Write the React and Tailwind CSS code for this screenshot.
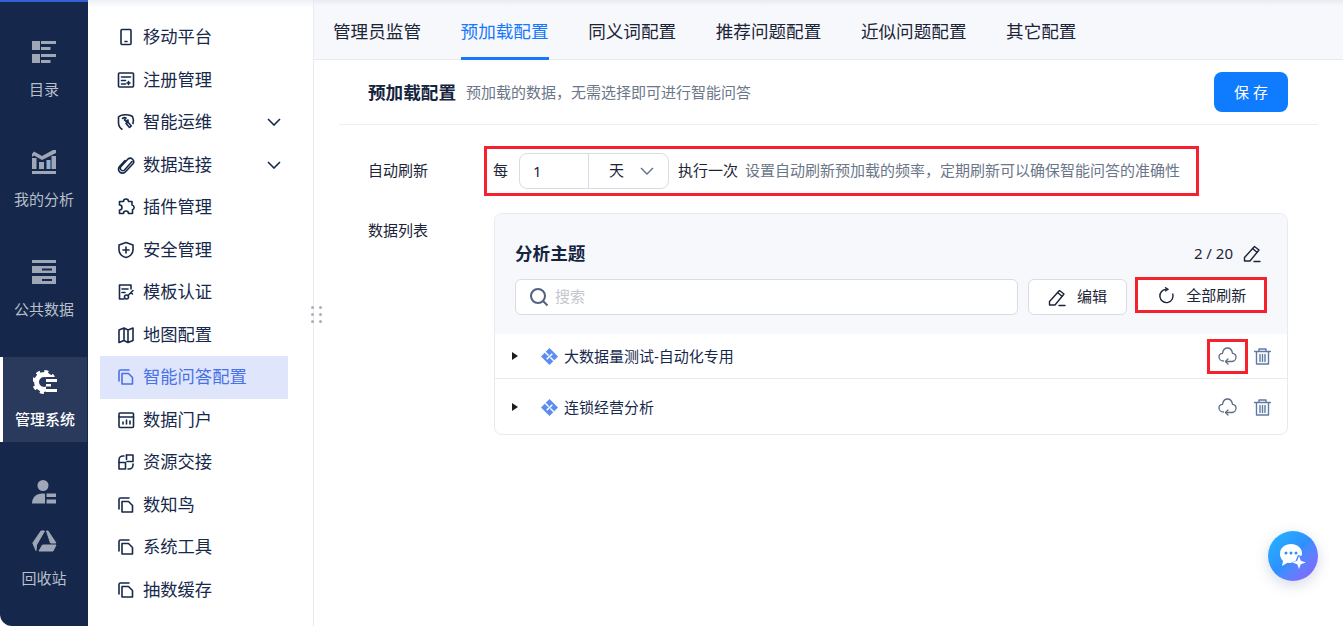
import React from 'react'

const FONT = { fontFamily: '"Noto Sans", "Noto Sans CJK SC", sans-serif' }

function Ico({ children, className = 'w-[18px] h-[18px]', sw = 1.6, vb = '0 0 18 18' }) {
  return (
    <svg viewBox={vb} className={className} fill="none" stroke="currentColor" strokeWidth={sw} strokeLinecap="round" strokeLinejoin="round">
      {children}
    </svg>
  )
}

const Pages = () => (
  <Ico>
    <path d="M2 13V3.500A1.500 1.500 0 0 1 3.500 2H12" />
    <path d="M5 5.500h6.500L15.500 9.500V16H5z" />
  </Ico>
)

const menu = [
  { label: '移动平台', icon: <Ico><rect x="4" y="1.500" width="10" height="15" rx="1" /><path d="M8 13.500h2" /></Ico> },
  { label: '注册管理', icon: <Ico><rect x="1.500" y="2" width="15" height="14" rx="1" /><path d="M4.500 6h9M4.500 9.500h4M4.500 13h4M11.500 10.500v3M10 12h3" /></Ico> },
  { label: '智能运维', arrow: true, icon: <Ico><path d="M5 16.200C3 15 1.500 12.500 1.500 9.500V4C4 1.500 12 .8 15.500 3.500c1 2 1 5 .5 7" /><path d="M5.500 5.500a3 3 0 0 1 3.500-.5L7.500 7l1.500 1.500L11 7a3 3 0 0 1-2 3.500l3.500 4 1.800-1.500-3-3.500" /></Ico> },
  { label: '数据连接', arrow: true, icon: <Ico><path d="M15 5.500l-7.500 8.500a2.500 2.500 0 0 1-3.700-3.300L11 3a3.500 3.500 0 0 1 5 4.800l-7.500 8a4 4 0 0 1-6-5.300L8 4.500" /></Ico> },
  { label: '插件管理', icon: <Ico><path d="M6.500 3.500a2.500 2.500 0 0 1 5 0h3.500V7a2.500 2.500 0 0 1 .5 4.800V15.500H11.500a2.500 2.500 0 0 0-5 0H2.500V12a2.500 2.500 0 0 0 0-5V3.500z" /></Ico> },
  { label: '安全管理', icon: <Ico><path d="M9 1.500l7 2.500v5c0 4-3.500 6.800-7 7.500-3.500-.7-7-3.500-7-7.500V4z" /><path d="M9 6v6M6 9h6" /></Ico> },
  { label: '模板认证', icon: <Ico><path d="M14 6V2H2.500v14H7" /><path d="M5 6h6M5 9.500h3" /><circle cx="9.500" cy="14" r="2" /><path d="M11 12.500l5-5M14 9.500l1.500 1.500" /></Ico> },
  { label: '地图配置', icon: <Ico><path d="M2 4l5-2 4 2 5-2v12.500l-5 2-4-2-5 2zM7 2v12.500M11 4v12.500" /></Ico> },
  { label: '智能问答配置', active: true, icon: <Pages /> },
  { label: '数据门户', icon: <Ico><rect x="2" y="2" width="14.500" height="14.500" rx="1" /><path d="M2 6h14.500M6 13v-2M9.500 13V9M13 13v-3" /></Ico> },
  { label: '资源交接', icon: <Ico><path d="M2 9.500h6.500V16H2zM9.500 2H16v6.500H10" /><path d="M9.500 2v4.500M2 9.500V7a4 4 0 0 1 4-4h1M11 16h1a4 4 0 0 0 4-4v-1" /></Ico> },
  { label: '数知鸟', icon: <Pages /> },
  { label: '系统工具', icon: <Pages /> },
  { label: '抽数缓存', icon: <Pages /> },
]

const G = '#9fa6b5'

function RailItem({ active, label, children }) {
  return (
    <div className={`flex flex-col items-center shrink-0 ${label ? 'h-[85px] mb-[25px]' : 'h-[49px]'} ${active ? 'bg-[#2a3a5d] border-l-[3px] border-white mr-px' : ''} ${active ? 'text-white' : 'text-[#b9bfca]'}`}>
      <div className="h-[25px] mt-[12px] flex items-center justify-center">{children}</div>
      {label && <div className={`text-[15px] leading-[20px] mt-[15px] whitespace-nowrap ${active ? 'font-medium' : ''}`}>{label}</div>}
    </div>
  )
}

function Rail() {
  return (
    <aside className="w-[88px] shrink-0 h-full bg-[#15284b] rounded-bl-[12px] overflow-hidden flex flex-col">
      <div className="h-[2px] shrink-0 bg-[#3261d8] mb-[25px]" />
      <RailItem label="目录">
        <svg viewBox="0 0 24 22" className="w-[24px] h-[22px]" fill={G}>
          <rect x="0" y="0" width="8" height="9" /><rect x="0" y="13" width="8" height="9" />
          <rect x="9" y="0" width="15" height="3" /><rect x="9" y="6" width="9.500" height="3" />
          <rect x="9" y="13" width="15" height="3" /><rect x="9" y="19" width="9.500" height="3" />
        </svg>
      </RailItem>
      <RailItem label="我的分析">
        <svg viewBox="0 0 24 24" className="w-[24px] h-[24px]" fill={G}>
          <rect x="0" y="21" width="24" height="3" />
          <rect x="0" y="8" width="4.500" height="11" /><rect x="7" y="12" width="5" height="7" />
          <rect x="14.500" y="10" width="4" height="9" fill="#8fb0d0" /><rect x="19.500" y="6" width="4.500" height="13" />
          <path d="M0 4l2-2.500 8 4.500 11-6h3v3L10 10 2 5.500 0 7z" />
        </svg>
      </RailItem>
      <RailItem label="公共数据">
        <svg viewBox="0 0 24 24" className="w-[24px] h-[24px]" fill={G}>
          <rect x="0" y="0" width="24" height="3" />
          <path d="M0 6h24v7H0zM10 8.500v2h10v-2z" fillRule="evenodd" />
          <path d="M0 16h24v8H0zM10 19v2h10v-2z" fillRule="evenodd" />
        </svg>
      </RailItem>
      <RailItem label="管理系统" active>
        <svg viewBox="0 0 24 24" className="w-[24px] h-[24px]" fill="none" stroke="#fff">
          <circle cx="11" cy="12" r="7.500" strokeWidth="5" />
          <circle cx="11" cy="12" r="10.500" strokeWidth="3" strokeDasharray="4 4.250" />
          <rect x="13" y="7" width="11" height="17" fill="#2a3a5d" stroke="none" />
          <rect x="13" y="9" width="11" height="3" fill="#fff" stroke="none" />
          <rect x="13" y="14" width="5" height="2.500" fill="#fff" stroke="none" />
          <rect x="13" y="19" width="11" height="3" fill="#fff" stroke="none" />
        </svg>
      </RailItem>
      <RailItem>
        <svg viewBox="0 0 24 24" className="w-[24px] h-[24px]" fill={G}>
          <circle cx="11" cy="5.500" r="5.500" />
          <path d="M0 23.500c0-6 4-10 10.500-10 1 0 1.500 0 2.500.2v9.800z" />
          <rect x="14.500" y="13.500" width="9.500" height="3.500" /><rect x="14.500" y="19.500" width="9.500" height="4" />
        </svg>
      </RailItem>
      <RailItem label="回收站">
        <svg viewBox="0 0 25 22" className="w-[25px] h-[22px]" fill={G} stroke={G} strokeWidth="1" strokeLinejoin="round">
          <path d="M9 1h3.500L4.500 15 4 20.500.8 13z" />
          <path d="M14.500 1h1.500L24 13h-5.500z" />
          <path d="M10.500 15H24l-3 6H7z" />
        </svg>
      </RailItem>
    </aside>
  )
}

function SubNav() {
  return (
    <nav className="w-[226px] shrink-0 h-full border-r border-[#e9ebf0] bg-white overflow-hidden relative">
      <div className="absolute top-0 inset-x-0 h-[8px] bg-gradient-to-b from-[#eef0f4] to-white" />
      <ul className="pl-[12px] pr-[25px] pt-[16px]">
        {menu.map((m) => (
          <li key={m.label} className={`h-[42.5px] flex items-center pl-[17px] pr-[7px] ${m.active ? 'bg-[#dfe5fa] text-[#4a72e8]' : 'text-[#17294b]'}`}>
            <span className="w-[18px] h-[18px] flex shrink-0">{m.icon}</span>
            <span className="ml-[8px] text-[17.3px] whitespace-nowrap">{m.label}</span>
            {m.arrow && (
              <svg viewBox="0 0 14 8" className="w-[14px] h-[8px] ml-auto" fill="none" stroke="currentColor" strokeWidth="1.6">
                <path d="M1 1l6 6 6-6" />
              </svg>
            )}
          </li>
        ))}
      </ul>
    </nav>
  )
}

const Pencil = ({ className = 'w-[19px] h-[19px]' }) => (
  <Ico className={className} sw={1.4} vb="0 0 19 19">
    <path d="M1.500 13.500L11.500 2.500l4.500 3.500L7 17H1.500z" />
    <path d="M9.500 4.500l4.500 3.800M11 17.500h6" />
  </Ico>
)

const CloudRefresh = () => (
  <Ico className="w-[19px] h-[18px] text-[#5f6c82]" sw={1.3} vb="0 0 19 18">
    <path d="M5.500 14C3 14 1 12.300 1 10c0-2 1.500-3.500 3.500-3.700C5 3 7 1 9.500 1S14 3 14.500 6.300C16.500 6.500 18 8 18 10c0 2.500-2 4.500-4.500 4.500H7.500" />
    <path d="M10 12l-2.500 2.500L10 17" />
  </Ico>
)

const Trash = () => (
  <Ico className="w-[17px] h-[17px] text-[#5f7ba3]" sw={1.4} vb="0 0 17 17">
    <path d="M0.500 3.500h16M5 3.500V1h7v2.500M2.500 3.500V16h12V3.500M6 6.500v7M8.500 6.500v7M11 6.500v7" />
  </Ico>
)

const Diamond = () => (
  <svg viewBox="0 0 18 18" className="w-[17px] h-[17px]">
    <path d="M9 0l9 9-9 9-9-9z" fill="#5b8def" />
    <path d="M4.500 4.500L8 8M13.500 13.500L10 10M6 12l6-6" fill="none" stroke="#fff" strokeWidth="1.6" />
  </svg>
)

function Row({ label, boxed, tall }) {
  return (
    <div className={`flex items-center pl-[17px] pr-[16px] ${tall ? 'h-[55px] pt-px' : 'h-[44px] border-b border-[#e8eaf0] box-content'}`}>
      <span className="w-0 h-0 border-y-[4.5px] border-y-transparent border-l-[6px] border-l-[#1c1c1c]" />
      <span className="ml-[23px] flex"><Diamond /></span>
      <span className="ml-[6px] text-[15px] text-[#17294b]">{label}</span>
      <span className={`ml-auto w-[41px] h-[35px] flex items-center justify-center border-[3px] ${boxed ? 'border-[#f5222d]' : 'border-transparent'}`}>
        <CloudRefresh />
      </span>
      <span className="ml-[6px] flex"><Trash /></span>
    </div>
  )
}

function Main() {
  return (
    <main className="flex-1 min-w-0 h-full flex flex-col relative">
      <div className="absolute top-0 inset-x-0 h-[6px] bg-gradient-to-b from-[#e9ebf0] to-transparent" />
      <div className="absolute left-[-3px] top-[306px] grid grid-cols-2 gap-x-[5px] gap-y-[4px]">
        {[0, 1, 2, 3, 4, 5].map((i) => <span key={i} className="w-[3px] h-[3px] rounded-full bg-[#a9afbc]" />)}
      </div>

      <div className="h-[60px] shrink-0 bg-[#f7f8fc] border-b border-[#e8eaf0] pl-[19px] flex gap-[39.6px] text-[17.6px] text-[#1b2537]">
        {['管理员监管', '预加载配置', '同义词配置', '推荐问题配置', '近似问题配置', '其它配置'].map((t, i) => (
          <div key={t} className={`h-[60px] pt-[6px] flex items-center border-b-[3px] ${i === 1 ? 'border-[#1677ff] text-[#1677ff]' : 'border-transparent'}`}>{t}</div>
        ))}
      </div>

      <div className="pl-[25px] pr-[25px]">
        <div className="h-[65px] flex items-center pl-[29px] pr-[30px] border-b border-[#eceef2]">
          <span className="text-[17.6px] font-bold text-[#15243f]">预加载配置</span>
          <span className="ml-[10px] text-[15px] text-[#6b7688]">预加载的数据，无需选择即可进行智能问答</span>
          <button className="ml-auto w-[74px] h-[40px] rounded-[8px] bg-[#0f7bff] text-white text-[15px] tracking-[4px] pl-[4px]">保存</button>
        </div>

        <div className="flex items-center mt-[21px] ml-[29px]">
          <span className="w-[116px] pb-[2px] text-[15px] text-[#1b2537]">自动刷新</span>
          <div className="w-[715px] h-[50px] border-[3px] border-[#f5222d] flex items-center pl-[6px] text-[15px] whitespace-nowrap">
            <span className="pb-[2px] text-[#1b2537]">每</span>
            <div className="ml-[11px] w-[150px] h-[36px] rounded-[8px] border border-[#d9dce3] bg-white flex items-center text-[#1b2537]">
              <span className="w-[69px] pl-[13px] border-r border-[#d9dce3] h-full flex items-center">1</span>
              <span className="ml-[20px] pb-[2px]">天</span>
              <svg viewBox="0 0 14 8" className="w-[14px] h-[8px] ml-[16px] text-[#5f6f88]" fill="none" stroke="currentColor" strokeWidth="1.4">
                <path d="M1 1l6 6 6-6" />
              </svg>
            </div>
            <span className="ml-[9px] pb-[2px] text-[#1b2537]">执行一次</span>
            <span className="ml-[7px] pb-[2px] text-[#6b7688]">设置自动刷新预加载的频率，定期刷新可以确保智能问答的准确性</span>
          </div>
        </div>

        <div className="flex items-start mt-[17px] ml-[29px]">
          <span className="w-[126px] shrink-0 mt-[6px] text-[15px] text-[#1b2537]">数据列表</span>
          <section className="w-[794px] rounded-[8px] border border-[#e8eaf0] overflow-hidden">
            <div className="h-[120px] bg-[#f7f8fc] px-[20px]">
              <div className="h-[65px] pt-[13px] flex items-center">
                <span className="text-[17.6px] font-bold text-[#15243f]">分析主题</span>
                <span className="ml-auto text-[15px] text-[#1b2537]">2 / 20</span>
                <span className="ml-[10px] mr-[5px] text-[#1b2537] flex"><Pencil /></span>
              </div>
              <div className="flex items-start">
                <div className="w-[504px] h-[36px] rounded-[6px] border border-[#d9dce3] bg-white flex items-center pl-[13px]">
                  <svg viewBox="0 0 20 20" className="w-[20px] h-[20px] text-[#50627e]" fill="none" stroke="currentColor" strokeWidth="2">
                    <circle cx="9" cy="9" r="7" /><path d="M14 14l4.500 4.500" />
                  </svg>
                  <span className="ml-[6px] pb-[2px] text-[15px] text-[#c4c7cc]">搜索</span>
                </div>
                <button className="ml-[10px] w-[100px] h-[36px] rounded-[6px] border border-[#d9dce3] bg-white flex items-center justify-center gap-[10px] text-[15px] text-[#1b2537]">
                  <Pencil /><span className="pb-[2px]">编辑</span>
                </button>
                <button className="ml-[8px] -mt-[2px] w-[132px] h-[36px] border-[3px] border-[#f5222d] bg-white flex items-center justify-center gap-[11px] pl-[2px] text-[15px] text-[#1b2537]">
                  <svg viewBox="0 0 18 18" className="w-[17px] h-[17px]" fill="none" stroke="currentColor" strokeWidth="1.5">
                    <path d="M9 2.500A7 7 0 1 0 15.500 7" /><path d="M7.500 0.500l3 2-3 2" />
                  </svg>
                  全部刷新
                </button>
              </div>
            </div>
            <Row label="大数据量测试-自动化专用" boxed />
            <Row label="连锁经营分析" tall />
          </section>
        </div>
      </div>

      <div className="absolute left-[954px] top-[531px] w-[50px] h-[50px] rounded-full bg-gradient-to-br from-[#22b8ff] via-[#2f8fff] to-[#8a5cff] shadow-[0_4px_14px_rgba(60,80,140,0.22)] flex items-center justify-center">
        <svg viewBox="0 0 28 26" className="w-[28px] h-[26px]" fill="#fff">
          <path d="M12 1c6 0 11 4 11 9 0 1-.2 2-.6 3l-3.400-1-2.500 6-5 2c-1 0-2 0-3-.2L3 23l1-5C2 16 1 13.500 1 10.500 1 5 6 1 12 1z" />
          <circle cx="7" cy="10" r="1.500" fill="#2f8fff" /><circle cx="12" cy="10" r="1.500" fill="#2f8fff" /><circle cx="17" cy="10" r="1.500" fill="#2f8fff" />
          <path d="M20 13l1.800 4.700 5 1.800-5 1.800L20 26l-1.800-4.700-5-1.800 5-1.800z" />
        </svg>
      </div>
    </main>
  )
}

export default function App() {
  return (
    <div className="w-[1343px] h-[626px] flex overflow-hidden bg-white" style={FONT}>
      <Rail />
      <SubNav />
      <Main />
    </div>
  )
}
